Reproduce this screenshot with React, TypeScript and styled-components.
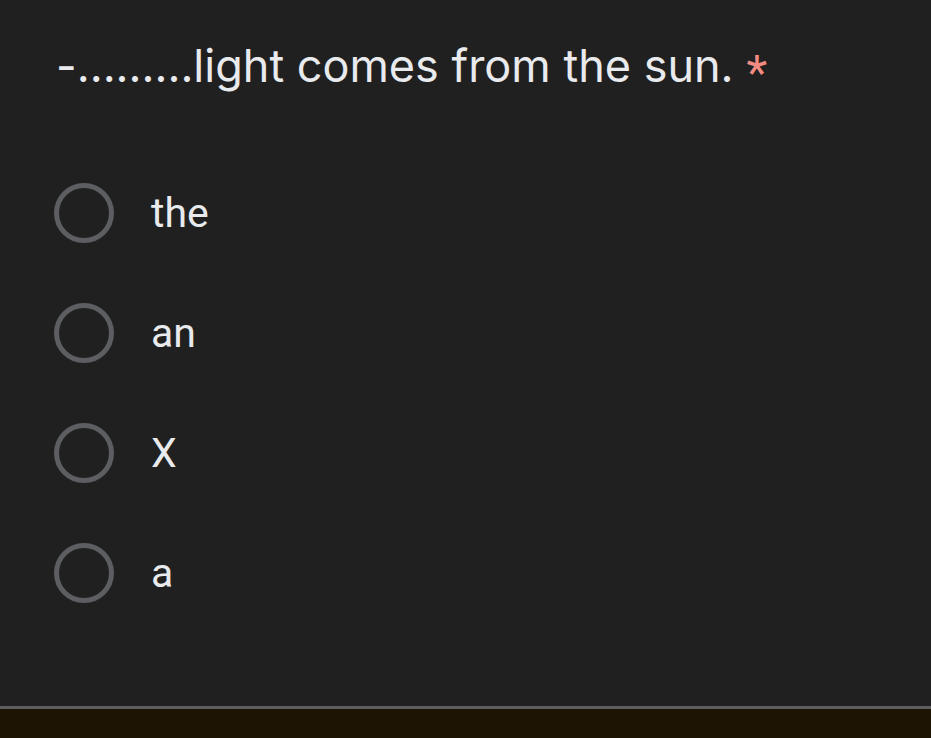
import React from "react";
import styled, { createGlobalStyle } from "styled-components";

const Global = createGlobalStyle`
  html, body { margin: 0; padding: 0; background: #1e1404; }
  #root { width: 931px; height: 738px; }
`;

const Page = styled.div`
  display: flex;
  flex-direction: column;
  width: 931px;
  height: 738px;
`;

const Card = styled.div`
  height: 706px;
  background: #202020;
  box-sizing: border-box;
  padding: 34px 0 0 56px;
  display: flex;
  flex-direction: column;
`;

const Divider = styled.div`
  height: 3px;
  background: #5e5e5e;
`;

const Footer = styled.div`
  flex: 1;
  background: #1e1404;
`;

const Title = styled.div`
  font-family: "Inter", "Lato", sans-serif;
  font-size: 45px;
  line-height: 64px;
  height: 64px;
  color: #e8eaed;
  display: flex;
  align-items: flex-start;
  gap: 13px;
`;

const Star = styled.span`
  color: #f28b82;
  font-family: "Roboto", sans-serif;
  font-size: 48px;
  line-height: 48px;
  margin-top: 15px;
`;

const Options = styled.div`
  display: flex;
  flex-direction: column;
  gap: 60px;
  margin-top: 85px;
  margin-left: -2px;
`;

const Option = styled.label`
  display: flex;
  align-items: center;
  height: 60px;
  gap: 37px;
`;

const Radio = styled.span`
  width: 60px;
  height: 60px;
  box-sizing: border-box;
  border-radius: 50%;
  border: 5.5px solid #5c5e62;
  flex: none;
`;

const OptionText = styled.span`
  font-family: "Roboto", sans-serif;
  font-size: 41px;
  color: #e8eaed;
  line-height: 1;
`;

const options = ["the", "an", "X", "a"];

export default function App() {
  return (
    <Page>
      <Global />
      <Card>
        <Title>
          <span>-.........light comes from the sun.</span>
          <Star>*</Star>
        </Title>
        <Options>
          {options.map((o) => (
            <Option key={o}>
              <Radio />
              <OptionText>{o}</OptionText>
            </Option>
          ))}
        </Options>
      </Card>
      <Divider />
      <Footer />
    </Page>
  );
}
